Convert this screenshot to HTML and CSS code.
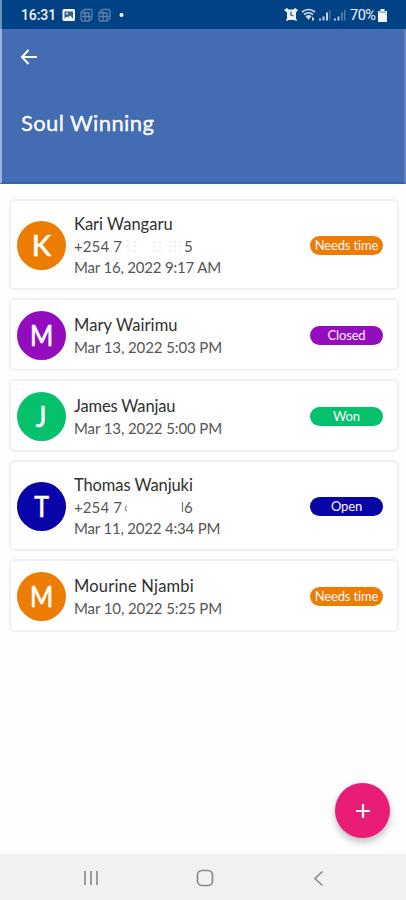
FILE: index.html
```html
<!DOCTYPE html>
<html lang="en">
<head>
<meta charset="utf-8">
<title>Soul Winning</title>
<link rel="stylesheet" href="styles.css">
</head>
<body>
<div class="screen">
  <div class="status">
    <span class="clock">16:31</span>
    <svg class="notif" width="66" height="16" viewBox="0 0 66 16">
      <rect x="0.500" y="2" width="12.500" height="12" rx="1.500" fill="#f4f7fb"/>
      <path d="M2.500 4.500h8.500v7l-3-3-2 2-1-1-2.500 2z" fill="#315f94"/>
      <circle cx="5" cy="6.500" r="1" fill="#fff"/>
      <g fill="none" stroke="#5c82ad" stroke-width="1.300">
        <path d="M19 5.500 22 2.500h7l1 1.500v7.500L27 14h-7l-1-1.500zM20 6h7v7M23 4v9M20 9.500h9"/>
        <path d="M37 5.500 40 2.500h7l1 1.500v7.500L45 14h-7l-1-1.500zM38 6h7v7M41 4v9M38 9.500h9"/>
      </g>
      <circle cx="59.500" cy="8" r="2" fill="#fff"/>
    </svg>
    <svg class="signals" width="64" height="16" viewBox="0 0 64 16">
      <path d="m0 3 3-2 1.500 1.500h5L11 1l3 2-2 2.500v6l1 2-1 .500-1.500-1h-6L3 14l-1-.500 1-2v-6z" fill="#eef3f8"/>
      <path d="M7 4.500V8l2.500 1" fill="none" stroke="#27598f" stroke-width="1.200"/>
      <path d="M18 5q6.500-5 13 0M20 7.500q4.500-3.500 9 0M22 10q2.500-2 5 0" fill="none" stroke="#cfdeeb" stroke-width="1.700"/>
      <path d="m22.500 10 2 3 2-3zM28 9.500l2 2v2h-2z" fill="#cfdeeb"/>
      <path d="M35 11.500h2v2h-2zM38.500 9.500h2v4h-2zM42 5.500h2v8h-2z" fill="#c6d7e7"/>
      <path d="M45 3h1.500v10.500H45z" fill="#416f9f"/>
      <path d="M50 11.500h2v2h-2zM53.500 9.500h2v4h-2z" fill="#b1c7dc"/>
      <path d="M57 5.500h2v8h-2zM60 3h1.500v10.500H60z" fill="#4f79a6"/>
    </svg>
    <span class="percent">70%</span>
    <svg class="battery" width="9" height="13" viewBox="0 0 9 13"><path d="M2.500 0h4v2H9v11H0V2h2.500z" fill="#f3f6fa"/><path d="M1 2.500h7v1.300H1z" fill="#8ba7c5"/></svg>
  </div>

  <header class="header">
    <svg class="back" width="18" height="16" viewBox="0 0 18 16"><path d="M8.500 1 2 8l6.500 7M2 8h15" fill="none" stroke="#fff" stroke-width="2"/></svg>
    <h1 class="title">Soul Winning</h1>
  </header>

  <main class="list">
    <article class="card tall">
      <div class="avatar orange"><span>K</span></div>
      <div class="info">
        <div class="name">Kari Wangaru</div>
        <div class="phone"><span>+254 7</span>
          <svg class="mask" width="61" height="14" viewBox="0 0 61 14"><path d="M5 1v12M12 2v11M31 2v11M37 3v10M47 2v11M52 2v11M57 2v11" fill="none" stroke="#dedede" stroke-width="1.300" stroke-dasharray="1.500 3"/></svg>
          <span>5</span></div>
        <div class="date d1">Mar 16, 2022 9:17 AM</div>
      </div>
      <div class="badge orange">Needs time</div>
    </article>
    <article class="card">
      <div class="avatar purple"><span class="narrow">M</span></div>
      <div class="info">
        <div class="name n2">Mary Wairimu</div>
        <div class="date">Mar 13, 2022 5:03 PM</div>
      </div>
      <div class="badge purple">Closed</div>
    </article>
    <article class="card">
      <div class="avatar green"><span class="narrow">J</span></div>
      <div class="info">
        <div class="name n3">James Wanjau</div>
        <div class="date">Mar 13, 2022 5:00 PM</div>
      </div>
      <div class="badge green">Won</div>
    </article>
    <article class="card tall">
      <div class="avatar blue"><span class="narrow">T</span></div>
      <div class="info">
        <div class="name n4">Thomas Wanjuki</div>
        <div class="phone"><span>+254 7</span>
          <svg class="mask" width="61" height="14" viewBox="0 0 61 14"><path d="M4 6Q.500 8.500 4 11" fill="none" stroke="#888" stroke-width="1.100"/><path d="M59.500 2v10" stroke="#777" stroke-width="1.200"/></svg>
          <span>6</span></div>
        <div class="date d4">Mar 11, 2022 4:34 PM</div>
      </div>
      <div class="badge blue">Open</div>
    </article>
    <article class="card">
      <div class="avatar orange"><span class="narrow">M</span></div>
      <div class="info">
        <div class="name n5">Mourine Njambi</div>
        <div class="date">Mar 10, 2022 5:25 PM</div>
      </div>
      <div class="badge orange">Needs time</div>
    </article>
  </main>

  <nav class="nav">
    <svg width="18" height="18" viewBox="0 0 18 18"><path d="M3 2v14M9 2v14M15 2v14" stroke="#8d8d8d" stroke-width="1.700"/></svg>
    <svg width="18" height="18" viewBox="0 0 18 18"><rect x="1.500" y="1.500" width="15" height="15" rx="4.500" fill="none" stroke="#8b8b8b" stroke-width="1.700"/></svg>
    <svg width="18" height="18" viewBox="0 0 18 18"><path d="M12.500 2.500 5 9.500l7.500 7" fill="none" stroke="#8b8b8b" stroke-width="1.700"/></svg>
  </nav>
  <div class="fab"><svg width="16" height="16" viewBox="0 0 16 16"><path d="M8 1v14M1 8h14" stroke="#fff" stroke-width="2.200"/></svg></div>
</div>
</body>
</html>
```
FILE: styles.css
```css
* { box-sizing: border-box; }
body { margin: 0; background: #fff; font-family: Lato, "Open Sans", sans-serif; font-variant-ligatures: none; }
svg { display: block; flex: none; }
.screen { position: relative; width: 406px; height: 900px; display: flex; flex-direction: column; overflow: hidden; background: #fefefe; }
.status { height: 29px; flex: none; display: flex; align-items: center; padding: 1px 19px 0; background: #004283; border-left: 2px solid #6b91b5; color: #f2f6fa; font-family: Roboto, sans-serif; }
.clock { width: 41px; font-size: 14px; font-weight: 500; letter-spacing: -.1px; }
.signals { margin-left: auto; margin-right: 2px; }
.percent { width: 27px; font-size: 14.5px; letter-spacing: -.5px; white-space: nowrap; }
.battery { margin-left: 1px; }
.header { height: 155px; flex: none; padding: 20px 19px 0; background: #446cb3; border-left: 2px solid #9fb3d8; border-right: 2px solid #6484bf; border-bottom: 2px solid #3662aa; }
.back { margin-left: -1px; }
.title { margin: 44px 0 0; color: #fff; font-size: 22px; line-height: 28px; font-weight: 400; letter-spacing: .38px; white-space: nowrap; -webkit-text-stroke: .3px #fff; }
.list { flex: 1; display: flex; flex-direction: column; gap: 8px; padding: 15px 7px 0 9px; }
.card { height: 73px; flex: none; display: flex; align-items: center; padding: 1px 15px 0 6px; background: #fff; border: 2px solid #f1f1f1; border-radius: 5px; }
.tall { height: 91px; }
.avatar { width: 49px; height: 49px; flex: none; display: grid; place-items: center; border-radius: 50%; color: #fff; font-size: 29px; line-height: 30px; font-weight: 500; -webkit-text-stroke: .5px #fff; }
.narrow { transform: scaleX(.86); }
.orange { background: #ec7c02; }
.purple { background: #930cbd; }
.green { background: #05c16c; }
.blue { background: #0804a8; }
.info { flex: 1; margin-left: 8px; padding-top: 1px; white-space: nowrap; }
.name { font-size: 16.5px; line-height: 22px; color: #303030; }
.n2 { letter-spacing: .1px; }
.n3 { letter-spacing: -.15px; }
.n4 { letter-spacing: -.1px; }
.n5 { letter-spacing: .2px; }
.date { font-size: 15px; line-height: 22px; letter-spacing: -.1px; color: #555; }
.d1, .d4 { line-height: 21px; letter-spacing: -.19px; }
.phone { display: flex; align-items: center; height: 22px; font-size: 15px; line-height: 22px; color: #555; }
.phone span:first-child { width: 49px; letter-spacing: .1px; }
.badge { width: 73px; height: 19px; flex: none; margin-right: -1px; border-radius: 10px; color: #fff3ff; font-size: 13px; line-height: 18px; letter-spacing: -.15px; text-align: center; white-space: nowrap; }
.nav { height: 46px; flex: none; display: flex; justify-content: space-between; padding: 15px 78px 0 82px; background: #f1f1f1; }
.fab { position: absolute; left: 335px; top: 783px; width: 55px; height: 55px; display: grid; place-items: center; border-radius: 50%; background: #ea1d76; box-shadow: 0 4px 7px rgba(0, 0, 0, .25); }
```
